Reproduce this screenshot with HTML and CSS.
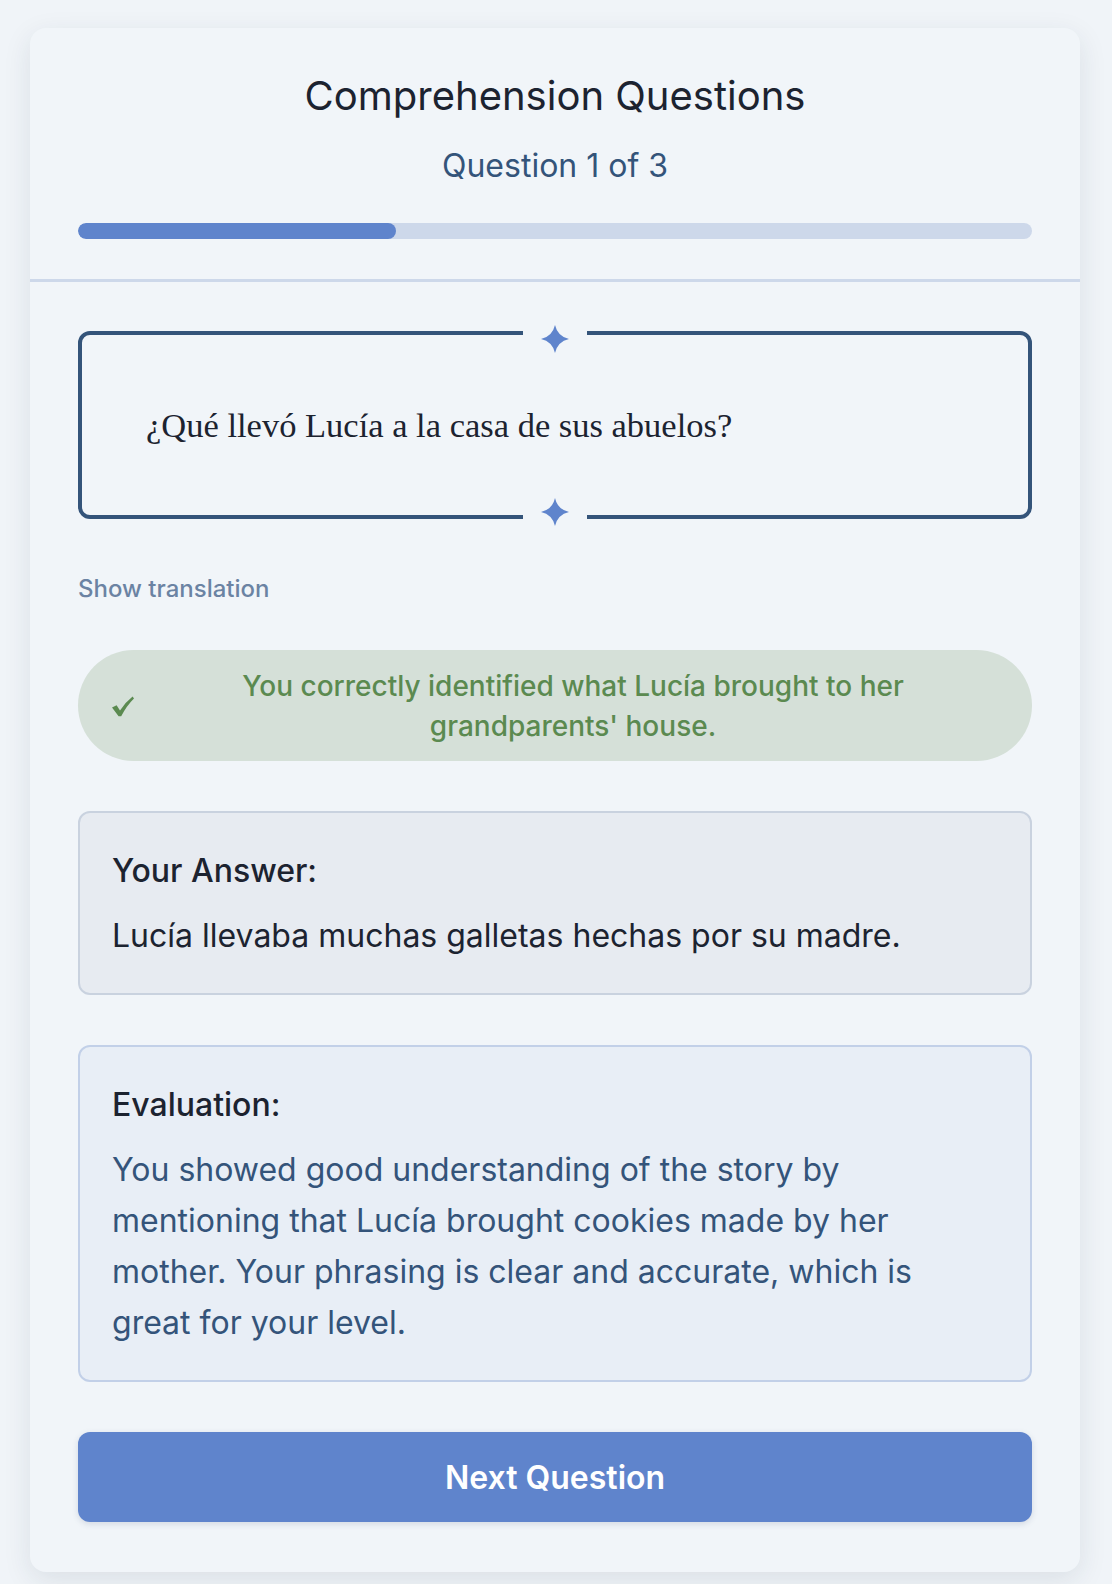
FILE: index.html
```html
<!DOCTYPE html>
<html lang="en">
<head>
    <meta charset="UTF-8">
    <meta name="viewport" content="width=device-width, initial-scale=1.0">
    <title>Comprehension Questions</title>
    <link rel="stylesheet" href="styles.css">
</head>
<body>
    <div class="card">
        <header class="card-header">
            <h1 class="title">Comprehension Questions</h1>
            <div class="counter">Question 1 of 3</div>
            <div class="progress">
                <div class="progress-fill" style="width: 33.33%"></div>
            </div>
        </header>

        <main class="card-body">
            <div class="question-box">
                <span class="sparkle sparkle-top">
                    <svg viewBox="0 0 24 24" width="28" height="28"><path d="M12 0Q14.2 9.8 24 12Q14.2 14.2 12 24Q9.8 14.2 0 12Q9.8 9.8 12 0Z"/></svg>
                </span>
                <p class="question">¿Qué llevó Lucía a la casa de sus abuelos?</p>
                <span class="sparkle sparkle-bottom">
                    <svg viewBox="0 0 24 24" width="28" height="28"><path d="M12 0Q14.2 9.8 24 12Q14.2 14.2 12 24Q9.8 14.2 0 12Q9.8 9.8 12 0Z"/></svg>
                </span>
            </div>

            <a class="translate-link" href="#">Show translation</a>

            <div class="feedback">
                <svg class="feedback-icon" viewBox="0 0 22 22" width="22" height="22"><path d="M0 12.5L4.6 10.2L8 15.4Q13 7.4 20.6 1.4L22 3.4Q14.6 10.6 9.2 21.2L6.6 21.2Z"/></svg>
                <p class="feedback-text">You correctly identified what Lucía brought to her grandparents' house.</p>
            </div>

            <div class="panel answer">
                <h3>Your Answer:</h3>
                <p>Lucía llevaba muchas galletas hechas por su madre.</p>
            </div>

            <div class="panel evaluation">
                <h3>Evaluation:</h3>
                <p>You showed good understanding of the story by mentioning that Lucía brought cookies made by her mother. Your phrasing is clear and accurate, which is great for your level.</p>
            </div>

            <button class="next-btn" type="button">Next Question</button>
        </main>
    </div>
</body>
</html>
```

FILE: styles.css
```css
body {
    font-family: 'Inter', 'Noto Sans', sans-serif;
    background-color: #f0f4f8;
    margin: 0;
    padding: 28px 32px 12px 30px;
    color: #1c2330;
}

.card {
    background-color: #f1f5f9;
    border-radius: 16px;
    box-shadow: 0 8px 28px rgba(30, 45, 70, 0.10);
    overflow: hidden;
}

.card-header {
    padding: 43px 48px 40px;
    border-bottom: 3px solid #cdd8ea;
    text-align: center;
}

.title {
    margin: 0;
    font-size: 40px;
    font-weight: 400;
    line-height: 50px;
    color: #1c2330;
}

.counter {
    margin-top: 24px;
    font-size: 32px;
    line-height: 42px;
    color: #34547a;
}

.progress {
    margin-top: 36px;
    height: 16px;
    border-radius: 8px;
    background-color: #cdd8ea;
    overflow: hidden;
}

.progress-fill {
    height: 100%;
    background-color: #5f84cc;
    border-radius: 8px;
}

.card-body {
    padding: 49px 48px 50px;
    display: flex;
    flex-direction: column;
}

.question-box {
    position: relative;
    border: 4px solid #34547a;
    border-radius: 12px;
    min-height: 180px;
    padding: 0 64px;
    display: flex;
    align-items: center;
}

.question {
    margin: 0;
    font-family: 'Liberation Serif', 'DejaVu Serif', serif;
    font-size: 34.5px;
    color: #1c2330;
}

.sparkle {
    position: absolute;
    left: 50%;
    transform: translateX(-50%);
    padding: 0 18px;
    background-color: #f1f5f9;
    line-height: 0;
    fill: #5f84cc;
}

.sparkle-top {
    top: -10px;
}

.sparkle-bottom {
    bottom: -11px;
}

.translate-link {
    margin-top: 55px;
    font-size: 24px;
    font-weight: 500;
    line-height: 29px;
    color: #6b83a3;
    text-decoration: none;
    align-self: flex-start;
}

.feedback {
    margin-top: 47px;
    background-color: #d5e0d8;
    border-radius: 56px;
    min-height: 111px;
    padding: 0 32px 0 34px;
    display: flex;
    align-items: center;
    gap: 12px;
    color: #5b8a50;
}

.feedback-icon {
    flex: none;
    fill: #5b8a50;
}

.feedback-text {
    flex: 1;
    margin: 0;
    padding: 0 40px;
    text-align: center;
    font-size: 28px;
    font-weight: 500;
    line-height: 40px;
}

.panel {
    margin-top: 50px;
    border-radius: 12px;
    padding: 32px;
}

.panel h3 {
    margin: 0 0 14px;
    font-size: 32px;
    font-weight: 500;
    line-height: 51px;
    color: #1c2330;
}

.panel p {
    margin: 0;
    font-size: 32px;
    line-height: 51px;
}

.answer {
    background-color: #e7ebf1;
    border: 2px solid #c9d2df;
}

.answer p {
    color: #1c2330;
}

.evaluation {
    background-color: #e8eef6;
    border: 2px solid #c2d0e8;
}

.evaluation p {
    color: #34547a;
}

.next-btn {
    margin-top: 50px;
    height: 90px;
    border: none;
    border-radius: 12px;
    background-color: #5f84cc;
    color: #fff;
    font-family: inherit;
    font-size: 32px;
    font-weight: 600;
    cursor: pointer;
    box-shadow: 0 2px 6px rgba(40, 60, 100, 0.15);
}
```
